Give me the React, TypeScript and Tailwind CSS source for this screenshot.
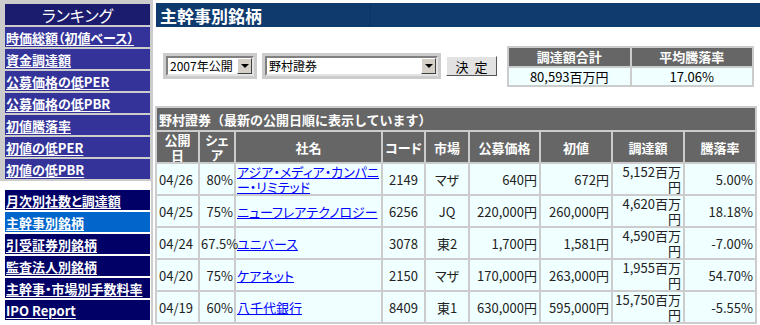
import React from 'react'

const rankItems = [
  '時価総額（初値ベース）',
  '資金調達額',
  '公募価格の低PER',
  '公募価格の低PBR',
  '初値騰落率',
  '初値の低PER',
  '初値の低PBR',
]

const menuItems = [
  { label: '月次別社数と調達額' },
  { label: '主幹事別銘柄', active: true },
  { label: '引受証券別銘柄' },
  { label: '監査法人別銘柄' },
  { label: '主幹事・市場別手数料率' },
  { label: 'IPO Report' },
]

type Row = {
  date: string
  share: string
  name: string[]
  code: string
  market: string
  price: string
  first: string
  amount: string
  rate: string
}

const rows: Row[] = [
  { date: '04/26', share: '80%', name: ['アジア・メディア・カンパニ', 'ー・リミテッド'], code: '2149', market: 'マザ', price: '640円', first: '672円', amount: '5,152', rate: '5.00%' },
  { date: '04/25', share: '75%', name: ['ニューフレアテクノロジー'], code: '6256', market: 'JQ', price: '220,000円', first: '260,000円', amount: '4,620', rate: '18.18%' },
  { date: '04/24', share: '67.5%', name: ['ユニバース'], code: '3078', market: '東2', price: '1,700円', first: '1,581円', amount: '4,590', rate: '-7.00%' },
  { date: '04/20', share: '75%', name: ['ケアネット'], code: '2150', market: 'マザ', price: '170,000円', first: '263,000円', amount: '1,955', rate: '54.70%' },
  { date: '04/19', share: '60%', name: ['八千代銀行'], code: '8409', market: '東1', price: '630,000円', first: '595,000円', amount: '15,750', rate: '-5.55%' },
]

function FakeSelect({ value, width }: { value: string; width: string }) {
  return (
    <div className="bg-[#cccccc] p-[3px]">
      <div
        className={`flex h-[20px] items-center border-2 border-t-[#808080] border-l-[#808080] border-b-[#e4e4e4] border-r-[#e4e4e4] bg-white ${width}`}
      >
        <span className="flex-1 whitespace-nowrap pl-[2px] text-[12px] leading-[16px] text-black">{value}</span>
        <span className="flex h-[16px] w-[15px] shrink-0 items-center justify-center border border-t-white border-l-white border-b-[#404040] border-r-[#404040] bg-[#d4d0c8]">
          <span className="block h-0 w-0 border-x-[4px] border-t-[4px] border-x-transparent border-t-black" />
        </span>
      </div>
    </div>
  )
}

function Sidebar() {
  return (
    <div className="w-[153px] shrink-0 border-r-2 border-[#cccccc]">
      {/* ranking box */}
      <div className="flex flex-col gap-[2px] bg-[#cccccc] pt-[4px] pb-[2px] pl-[5px] pr-[1px]">
        <div className="flex h-[21px] items-center justify-center bg-[#1c1c6e] text-[16px] leading-none text-white">
          ランキング
        </div>
        {rankItems.map(item => (
          <div key={item} className="flex h-[20px] items-center bg-[#333399] pl-[1px]">
            <a href="#" className="text-[13px] font-bold leading-none text-white underline underline-offset-2">
              {item}
            </a>
          </div>
        ))}
      </div>

      <div className="mt-[9px] flex flex-col gap-[2px] pl-[5px] pr-[1px]">
        {menuItems.map(item => (
          <div
            key={item.label}
            className={`flex h-[20px] items-center pl-[1px] ${item.active ? 'bg-[#0066cc]' : 'bg-[#000066]'}`}
          >
            <a href="#" className="text-[13px] font-bold leading-none text-white underline underline-offset-2">
              {item.label}
            </a>
          </div>
        ))}
      </div>
    </div>
  )
}

export default function App() {
  return (
    <div className="flex min-h-[325px] w-[760px] bg-white font-['Noto_Sans_CJK_JP',sans-serif] text-[#222] [font-feature-settings:'palt']">
      <Sidebar />

      <div className="flex-1 pl-[2px] pt-[3px]">
        {/* page title */}
        <div className="ml-[1px] flex h-[24px]">
          <div className="flex w-[214px] items-center bg-[#0e3a6d] pl-[4px] text-[17px] font-bold leading-none text-white">
            主幹事別銘柄
          </div>
          <div className="flex-1 border-l border-[#0a3463] bg-[#0f3b6e]" />
        </div>

        {/* form + summary */}
        <div className="mt-[19px] flex h-[40px] items-center justify-between pl-[8px] pr-[6px]">
          <div className="flex items-center gap-[5px]">
            <FakeSelect value="2007年公開" width="w-[88px]" />
            <FakeSelect value="野村證券" width="w-[173px]" />
            <button className="flex h-[20px] w-[51px] items-center justify-center border border-t-white border-l-white border-b-[#555] border-r-[#555] bg-[#e2e2e2] text-[13px] leading-none text-black">
              決&nbsp;&nbsp;定
            </button>
          </div>

          <table className="w-[247px] table-fixed border-separate border-spacing-[2px] bg-[#cccccc] text-[13px]">
            <tbody>
              <tr>
                <th className="h-[18px] bg-[#666666] p-0 font-bold leading-none text-white">調達額合計</th>
                <th className="h-[18px] bg-[#666666] p-0 font-bold leading-none text-white">平均騰落率</th>
              </tr>
              <tr>
                <td className="h-[17px] bg-[#f0ffff] p-0 text-center leading-none text-black">80,593百万円</td>
                <td className="h-[17px] bg-[#f0ffff] p-0 text-center leading-none text-black">17.06%</td>
              </tr>
            </tbody>
          </table>
        </div>

        {/* result table */}
        <table className="mt-[20px] w-[602px] table-fixed border-separate border-spacing-[2px] bg-[#cccccc] text-[13px]">
          <colgroup>
            <col className="w-[41px]" />
            <col className="w-[34px]" />
            <col className="w-[145px]" />
            <col className="w-[41px]" />
            <col className="w-[42px]" />
            <col className="w-[69px]" />
            <col className="w-[70px]" />
            <col className="w-[70px]" />
            <col className="w-[70px]" />
          </colgroup>
          <thead>
            <tr>
              <td colSpan={9} className="h-[22px] bg-[#666666] p-0 pl-[2px] font-bold leading-none text-white [font-feature-settings:normal]">
                野村證券（最新の公開日順に表示しています）
              </td>
            </tr>
            <tr className="text-center font-bold leading-[15px] text-white">
              <th className="h-[30px] bg-[#666666] p-0">公開<br />日</th>
              <th className="h-[30px] bg-[#666666] p-0">シェ<br />ア</th>
              <th className="h-[30px] bg-[#666666] p-0">社名</th>
              <th className="h-[30px] bg-[#666666] p-0">コード</th>
              <th className="h-[30px] bg-[#666666] p-0">市場</th>
              <th className="h-[30px] bg-[#666666] p-0">公募価格</th>
              <th className="h-[30px] bg-[#666666] p-0">初値</th>
              <th className="h-[30px] bg-[#666666] p-0">調達額</th>
              <th className="h-[30px] bg-[#666666] p-0">騰落率</th>
            </tr>
          </thead>
          <tbody>
            {rows.map(r => (
              <tr key={r.code} className="leading-[15px]">
                <td className="h-[30px] bg-[#f0ffff] px-[2px] py-0">{r.date}</td>
                <td className="h-[30px] bg-[#f0ffff] px-[1px] py-0 text-right">{r.share}</td>
                <td className="h-[30px] bg-[#f0ffff] px-[1px] py-0">
                  <a href="#" className="text-[#0000ff] underline">
                    {r.name.map((part, i) => (
                      <React.Fragment key={i}>
                        {i > 0 && <br />}
                        {part}
                      </React.Fragment>
                    ))}
                  </a>
                </td>
                <td className="h-[30px] bg-[#f0ffff] px-[2px] py-0 text-center">{r.code}</td>
                <td className="h-[30px] bg-[#f0ffff] px-[2px] py-0 text-center">{r.market}</td>
                <td className="h-[30px] bg-[#f0ffff] px-[2px] py-0 text-right">{r.price}</td>
                <td className="h-[30px] bg-[#f0ffff] px-[2px] py-0 text-right">{r.first}</td>
                <td className="h-[30px] bg-[#f0ffff] px-[2px] py-0 text-right">
                  {r.amount}百万
                  <br />円
                </td>
                <td className="h-[30px] bg-[#f0ffff] px-[2px] py-0 text-right">{r.rate}</td>
              </tr>
            ))}
          </tbody>
        </table>
      </div>
    </div>
  )
}
